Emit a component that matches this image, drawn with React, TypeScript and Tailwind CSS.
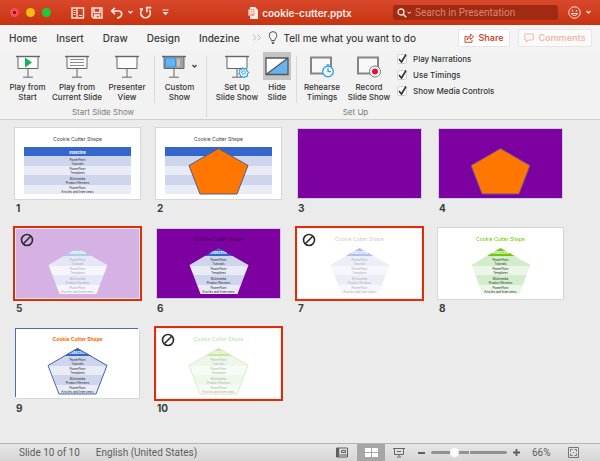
import React from "react";

type Palette = {
  header: string;
  odd: string;
  even: string;
  headText: string;
  text: string;
};

const BLUE: Palette = {
  header: "bg-[#3566cc]",
  odd: "bg-[#cfd5ec]",
  even: "bg-[#e9ebf7]",
  headText: "text-white",
  text: "text-[#1d1d2b]",
};

const PALE_BLUE: Palette = {
  header: "bg-[#b3c9ea]",
  odd: "bg-[#e4e7f6]",
  even: "bg-[#f6f5fc]",
  headText: "text-white",
  text: "text-[#aaa6b8]",
};

const GREEN: Palette = {
  header: "bg-[#6fc80a]",
  odd: "bg-[#d3eccb]",
  even: "bg-[#eaf6e6]",
  headText: "text-white",
  text: "text-[#1d2b1d]",
};

type Slide = {
  id: number;
  bg: string;
  frame: string;
  title?: string;
  table?: Palette;
  blankHeader?: boolean;
  clipped?: boolean;
  fill?: string;
  stroke?: string;
  hidden?: boolean;
  faded?: string;
};

const PLAIN = "shadow-[0_0_0_1px_#fff,0_0_0_2px_#d6d6d6]";
const PURPLE = "shadow-[0_0_0_1px_#cfc9ea]";

const slides: Slide[] = [
  { id: 1, bg: "bg-white", frame: PLAIN, title: "text-[#444]", table: BLUE },
  { id: 2, bg: "bg-white", frame: PLAIN, title: "text-[#444]", table: BLUE, blankHeader: true, fill: "#ff7700", stroke: "#4a5f96" },
  { id: 3, bg: "bg-[#7d00a0]", frame: PURPLE },
  { id: 4, bg: "bg-[#7d00a0]", frame: PURPLE, fill: "#ff7700", stroke: "#5f5590" },
  { id: 5, bg: "bg-[#d6b2e4]", frame: "", table: PALE_BLUE, clipped: true, hidden: true },
  { id: 6, bg: "bg-[#7d00a0]", frame: PURPLE, title: "text-[#43005c]", table: BLUE, clipped: true },
  { id: 7, bg: "bg-white", frame: "", title: "text-[#777]", table: BLUE, clipped: true, hidden: true, faded: "opacity-40" },
  { id: 8, bg: "bg-white", frame: PLAIN, title: "text-[#6fc80a]", table: GREEN, clipped: true },
  { id: 9, bg: "bg-white", frame: "shadow-[-1px_-1px_0_0_#4a6fae,1px_1px_0_0_#d6d6d6]", title: "font-bold text-[#ff6a00]", table: BLUE, clipped: true, stroke: "#4066b0" },
  { id: 10, bg: "bg-white", frame: "", title: "font-bold text-[#6fc85a]", table: GREEN, clipped: true, hidden: true, faded: "opacity-40", stroke: "#b5c47c" },
];

const rows: [string, string][] = [
  ["PowerPoint", "Tutorials"],
  ["PowerPoint", "Templates"],
  ["Multimedia", "Product Reviews"],
  ["PowerPoint", "Articles and Interviews"],
];

function Pentagon({ fill, stroke }: { fill?: string; stroke?: string }) {
  return (
    <svg className="absolute inset-0 size-full" viewBox="0 0 123 69" aria-hidden="true">
      <path d="M61.5 19.5 91 36.5 80 65H43L32 36.5Z" fill={fill ?? "none"} stroke={stroke ?? "none"} strokeWidth="1" />
    </svg>
  );
}

function SlideTable({ palette, clipped, blankHeader }: { palette: Palette; clipped?: boolean; blankHeader?: boolean }) {
  return (
    <div
      className={`mx-2 flex h-[47px] flex-col text-center text-[3px] leading-[4px] ${palette.text} ${
        clipped ? "[clip-path:polygon(50%_1px,calc(50%_+_30px)_18px,calc(50%_+_19px)_100%,calc(50%_-_18px)_100%,calc(50%_-_29px)_18px)]" : ""
      }`}
    >
      <div className={`h-[9px] pt-1 text-[4px] font-bold leading-[4px] ${palette.header} ${palette.headText}`}>
        {!blankHeader && "Indezine"}
      </div>
      {rows.map((r, i) => (
        <div key={i} className={`flex flex-1 flex-col justify-end ${i % 2 ? palette.even : palette.odd}`}>
          <span>{r[0]}</span>
          <span>{r[1]}</span>
        </div>
      ))}
    </div>
  );
}

function Thumb({ slide }: { slide: Slide }) {
  return (
    <li className="flex h-[100px] w-[129px] flex-col">
      <button
        aria-label={`Slide ${slide.id}`}
        className={`block h-[75px] w-full border-2 p-px ${slide.hidden ? "border-[#df2d0b] bg-[#fbeeee]" : "border-transparent"}`}
      >
        <div className={`relative h-full ${slide.bg} ${slide.frame}`}>
          <div className={`h-full ${slide.faded ?? ""}`}>
            <div className={`h-[18px] pt-[7px] text-center text-[5px] leading-[6px] ${slide.title ?? ""}`}>
              {slide.title && "Cookie Cutter Shape"}
            </div>
            {slide.table && <SlideTable palette={slide.table} clipped={slide.clipped} blankHeader={slide.blankHeader} />}
            {(slide.fill || slide.stroke) && <Pentagon fill={slide.fill} stroke={slide.stroke} />}
          </div>
          {slide.hidden && (
            <svg className="absolute left-1 top-1 size-[14px]" viewBox="0 0 14 14" fill="none" stroke="#2b2b30" aria-hidden="true">
              <circle cx="7" cy="7" r="5.5" strokeWidth="1.6" />
              <path d="m3.5 10.500 7-7" strokeWidth="1.6" />
            </svg>
          )}
        </div>
      </button>
      <span className="pl-[3px] text-[10px] font-bold leading-[14px] text-[#3c3c3c]">{slide.id}</span>
    </li>
  );
}

function Screen({ children, fill = "#fbfbfb" }: { children?: React.ReactNode; fill?: string }) {
  return (
    <svg className="h-6 w-[26px]" viewBox="0 0 26 24" fill="none" stroke="#666" aria-hidden="true">
      <path d="M3 2.500H23V14.500H3Z" fill={fill} />
      <path d="M1 2.500H25" strokeWidth="1.400" />
      <path d="M13 14.500V23M8 23.200H18" />
      {children}
    </svg>
  );
}

function Tool({ icon, lines, className = "", pressed }: { icon: React.ReactNode; lines: [string, string]; className?: string; pressed?: boolean }) {
  return (
    <button aria-pressed={pressed} className={`flex shrink-0 flex-col items-center ${className}`}>
      <span className={`flex h-[28px] items-center ${pressed ? "bg-[#c4c4c4] px-px" : ""}`}>{icon}</span>
      <span className="mt-[2px] whitespace-nowrap text-center text-[8px] font-medium leading-[10px] text-[#333]">
        {lines[0]}
        <br />
        {lines[1]}
      </span>
    </button>
  );
}

function Caret({ className = "" }: { className?: string }) {
  return (
    <svg className={`h-[5px] w-[7px] ${className}`} viewBox="0 0 7 5" fill="none" stroke="currentColor" strokeWidth="1.400" aria-hidden="true">
      <path d="m1.500 1 2 2 2-2" />
    </svg>
  );
}

function TitleBar() {
  return (
    <header className="grid h-[25px] grid-cols-[1fr_auto_1fr] items-center bg-linear-to-b from-[#d9482a] to-[#c5330f] text-[#fbe6e0]">
      <div className="flex items-center pl-[10px]">
        <div className="flex gap-[7px]">
          <button aria-label="Close" className="flex size-[9px] items-center justify-center rounded-full bg-[#fb4a55]">
            <span className="size-[3px] rounded-full bg-[#6b0d10]" />
          </button>
          <button aria-label="Minimize" className="size-[9px] rounded-full bg-[#fdbc12]" />
          <button aria-label="Zoom" className="size-[9px] rounded-full bg-[#1fc93c]" />
        </div>
        <button aria-label="Toggle thumbnails" className="ml-5">
          <svg className="h-3 w-[14px]" viewBox="0 0 14 12" fill="none" stroke="currentColor">
            <rect x="1" y="1" width="11.500" height="10" strokeWidth="1.400" />
            <path d="M6 1V11" strokeWidth="1.400" />
            <path d="M2.500 3.500H4.500M2.500 5.500H4.500M2.500 7.500H4.500M8 8.500h3" />
          </svg>
        </button>
        <button aria-label="Save" className="ml-[6px]">
          <svg className="size-3" viewBox="0 0 12 12" fill="none" stroke="currentColor" strokeWidth="1.400">
            <path d="M1 1H11V11H2.500L1 9.500Z" />
            <path d="M3 1V5.500H9V1M3.500 11V8H8.500V11" />
            <path d="M5 8V11" />
          </svg>
        </button>
        <button aria-label="Undo" className="ml-[7px]">
          <svg className="h-3 w-[13px]" viewBox="0 0 13 12" fill="none" stroke="currentColor" strokeWidth="1.700">
            <path d="M5 .8 1.700 4 5 7.200M1.700 4H8.300C10.500 4 11.700 5.300 11.700 7S10 10.800 7 11" />
          </svg>
        </button>
        <Caret className="ml-[4px]" />
        <button aria-label="Repeat" className="ml-[5px]">
          <svg className="size-[13px]" viewBox="0 0 13 13" fill="none" stroke="currentColor" strokeWidth="1.700">
            <path d="M3.200 3.500A4.800 4.800 0 1 0 10.300 4M7.800 6.300V1.700H12.300" />
            <path d="M.8 3H4" />
          </svg>
        </button>
        <button aria-label="Customize toolbar" className="ml-[10px]">
          <svg className="h-[7px] w-[7px]" viewBox="0 0 7 7" fill="currentColor">
            <path d="M.5.500H6.500V1.500H.5ZM.5 3H6.500L3.500 6.200Z" />
          </svg>
        </button>
      </div>
      <h1 className="flex items-center gap-1 text-[10px] font-semibold leading-3 text-[#fdeee9]">
        <svg className="h-3 w-[10px]" viewBox="0 0 10 12" aria-hidden="true">
          <path d="M2 0H7L10 3V12H2Z" fill="#fdeee9" />
          <rect y="2" width="6.500" height="7" rx="1" fill="#f3a08c" />
          <path d="M2 8V3.500H4A1.200 1.200 0 0 1 4 6H2" fill="none" stroke="#fff" />
        </svg>
        cookie-cutter.pptx
      </h1>
      <div className="flex items-center justify-end pr-2">
        <label className="flex h-[15px] w-[165px] items-center rounded-[3px] bg-[#a02a12] pl-1">
          <svg className="h-[10px] w-[16px]" viewBox="0 0 16 10" fill="none" stroke="currentColor" aria-hidden="true">
            <circle cx="4" cy="4" r="3" strokeWidth="1.300" />
            <path d="m6.200 6.200 3 3" strokeWidth="1.500" />
            <path d="m10.500 4 1.700 1.300L14 4" />
          </svg>
          <input
            type="text"
            aria-label="Search in Presentation"
            placeholder="Search in Presentation"
            className="ml-[2px] w-0 flex-1 bg-transparent font-['Roboto','Liberation_Sans',sans-serif] text-[10px] leading-3 outline-none placeholder:text-[#dc8672]"
          />
        </label>
        <button aria-label="Feedback" className="ml-[10px] flex items-center gap-[4px]">
          <svg className="size-[13px]" viewBox="0 0 13 13" fill="none" stroke="currentColor">
            <circle cx="6.500" cy="6.500" r="5.700" />
            <path d="M3.500 7.500a3.200 3.200 0 0 0 6 0Z" />
            <path d="M4.500 4v1.500M8.500 4v1.500" strokeWidth="1.300" />
          </svg>
          <Caret />
        </button>
      </div>
    </header>
  );
}

function Tabs() {
  return (
    <nav className="flex h-[25px] items-center bg-[#f5f4f4] pl-[9px] pr-2 text-[10px] font-medium leading-3 text-[#3a3a3a]">
      <div className="flex gap-[19px]">
        {["Home", "Insert", "Draw", "Design", "Indezine"].map((t) => (
          <button key={t}>{t}</button>
        ))}
      </div>
      <button aria-label="More tabs" className="ml-3">
        <svg className="h-[7px] w-[10px]" viewBox="0 0 10 7" fill="none" stroke="#b8b8b8">
          <path d="m1 .5 3 3-3 3M5.500.500l3 3-3 3" />
        </svg>
      </button>
      <button className="ml-[6px] flex items-center gap-[6px] font-normal text-[#222]">
        <svg className="h-[13px] w-[10px]" viewBox="0 0 10 13" fill="none" stroke="#555" aria-hidden="true">
          <path d="M3.300 9.500C3.300 7.500 1.200 6.800 1.200 4.400a3.800 3.800 0 0 1 7.600 0C8.800 6.800 6.700 7.500 6.700 9.500ZM3.500 11.300h3M4 12.500h2" />
        </svg>
        Tell me what you want to do
      </button>
      <div className="ml-auto flex gap-2">
        <button className="flex h-[18px] w-[52px] items-center justify-center gap-1 rounded-[2px] border border-[#e6e6e6] bg-white text-[9px] font-semibold text-[#cc4b33]">
          <svg className="size-[10px]" viewBox="0 0 10 10" fill="none" stroke="currentColor" aria-hidden="true">
            <path d="M3.500 3.500H1V9.300H8V7M3 7C3.200 4.500 4.500 3.200 6.500 3.200V1L9.500 4 6.500 6.500V4.700C5 4.700 4 5.300 3 7Z" />
          </svg>
          Share
        </button>
        <button className="flex h-[18px] w-[74px] items-center justify-center gap-1 rounded-[2px] border border-[#e6e6e6] bg-[#fbfafa] text-[9px] font-semibold text-[#f0b9ac]">
          <svg className="size-[10px]" viewBox="0 0 10 10" fill="none" stroke="currentColor" aria-hidden="true">
            <path d="M.8 1H9.200V7H4.500L2.500 9.200V7H.8Z" />
          </svg>
          Comments
        </button>
      </div>
    </nav>
  );
}

function Check({ label }: { label: string }) {
  return (
    <label className="flex h-[16px] items-center gap-[6px] text-[8px] font-medium leading-[10px] text-[#333]">
      <span className="relative flex size-[10px]">
        <input type="checkbox" defaultChecked className="peer size-[10px] appearance-none rounded-[2px] border border-[#d2d2d2] bg-white" />
        <svg className="pointer-events-none absolute -top-px left-0 hidden size-[11px] peer-checked:block" viewBox="0 0 11 11" fill="none" stroke="#333" strokeWidth="1.700" aria-hidden="true">
          <path d="m2 6 2.500 3L9 1.500" />
        </svg>
      </span>
      {label}
    </label>
  );
}

function Divider() {
  return <div className="mt-[6px] h-[47px] w-px shrink-0 bg-[#dadada]" />;
}

function Ribbon() {
  const clock = (
    <svg className="h-6 w-[26px]" viewBox="0 0 26 24" fill="none" aria-hidden="true">
      <rect x="2" y="3.500" width="20" height="16" fill="#f8f8f8" stroke="#858585" strokeWidth="2" />
      <circle cx="19" cy="17.500" r="5.300" fill="#fff" stroke="#35a3da" strokeWidth="1.400" />
      <path d="M19 14V17.500H22M17.500 11h3" stroke="#35a3da" strokeWidth="1.300" />
    </svg>
  );
  const record = (
    <svg className="h-6 w-[26px]" viewBox="0 0 26 24" fill="none" aria-hidden="true">
      <rect x="2" y="3.500" width="20" height="16" fill="#f8f8f8" stroke="#858585" strokeWidth="2" />
      <circle cx="19" cy="17.500" r="5.500" fill="#fff" stroke="#777" />
      <circle cx="19" cy="17.500" r="3" fill="#e8112d" />
    </svg>
  );
  const hide = (
    <svg className="h-6 w-[26px]" viewBox="0 0 26 24" fill="none" aria-hidden="true">
      <path d="M2 4H24V20.500H2Z" fill="#fff" />
      <path d="M24 4V20.500H2Z" fill="#69b4ef" />
      <path d="M2 4H24V20.500H2ZM24 4 2 20.500" stroke="#555" strokeWidth="1.300" />
    </svg>
  );
  return (
    <section className="flex h-[70px] border-b border-[#cfcfcf] bg-[#f3f2f2]">
      <div className="flex w-[206px] shrink-0 flex-col">
        <div className="flex h-[56px] pl-[3px]">
          <Tool className="w-[49px] pt-[2px]" lines={["Play from", "Start"]} icon={<Screen><path d="m10 3.500 7 5-7 5Z" fill="#12b454" stroke="none" /></Screen>} />
          <Tool className="w-[50px] pt-[2px]" lines={["Play from", "Current Slide"]} icon={<Screen><path d="M6 5.500H20M6 8.500H20M6 11.500H20" stroke="#8a8a8a" /></Screen>} />
          <Tool className="w-[50px] pt-[2px]" lines={["Presenter", "View"]} icon={<Screen />} />
          <div className="w-[2px]" />
          <Divider />
          <Tool
            className="w-[49px] pt-[2px]"
            lines={["Custom", "Show"]}
            icon={
              <span className="flex items-center gap-1 text-[#444]">
                <Screen fill="#a0a0a0">
                  <path d="M4.500 4H14.500V13H4.500Z" fill="#62b5f5" stroke="#3b95dd" />
                  <path d="M17.500 5V12.500" stroke="#c9c0b5" strokeWidth="3" />
                </Screen>
                <Caret />
              </span>
            }
          />
        </div>
        <p className="text-center text-[8px] leading-[12px] text-[#7b7b7b]">Start Slide Show</p>
      </div>
      <div className="mt-[6px] h-[61px] w-px shrink-0 bg-[#dadada]" />
      <div className="flex w-[297px] shrink-0 flex-col">
        <div className="flex h-[56px] pl-1">
          <Tool
            className="w-[52px] pt-[2px]"
            lines={["Set Up", "Slide Show"]}
            icon={
              <Screen>
                <path d="m24.500 18.500-1.300 1.600.3 2-2 .2-1.200 1.500-1.600-1.200-2 .2-.4-2-1.500-1.100 1.100-1.700-.4-2 2-.5 1.100-1.600 1.700 1.100 2-.4.500 2Z" fill="#f5fbff" stroke="#35a3da" strokeWidth="1.200" />
                <circle cx="19.500" cy="18.500" r="1.800" stroke="#35a3da" />
              </Screen>
            }
          />
          <Tool className="w-[28px] pt-[2px]" pressed lines={["Hide", "Slide"]} icon={hide} />
          <div className="w-[5px]" />
          <Divider />
          <Tool className="w-[50px] pt-[2px]" lines={["Rehearse", "Timings"]} icon={clock} />
          <Tool className="w-[44px] pt-[2px]" lines={["Record", "Slide Show"]} icon={record} />
          <div className="ml-[6px] flex flex-col pt-px">
            <Check label="Play Narrations" />
            <Check label="Use Timings" />
            <Check label="Show Media Controls" />
          </div>
        </div>
        <p className="text-center text-[8px] leading-[12px] text-[#7b7b7b]">Set Up</p>
      </div>
    </section>
  );
}

function StatusBar() {
  return (
    <footer className="flex h-[18px] items-center border-t border-[#b4b4b4] bg-linear-to-b from-[#e6e6e6] to-[#d6d6d6] pl-[19px] pr-[21px] font-['Roboto','Liberation_Sans',sans-serif] text-[10px] leading-3 text-[#5d5d5d]">
      <span>Slide 10 of 10</span>
      <span className="ml-4">English (United States)</span>
      <div className="ml-auto flex h-full items-center">
        <button aria-label="Normal view" className="mr-[9px]">
          <svg className="h-[11px] w-[12px]" viewBox="0 0 12 11" fill="none" stroke="#5f5f5f">
            <path d="M.5 1H11.500V10H.5Z" />
            <path d="M2 1V10" strokeWidth="2.400" />
            <path d="M5.500 3.500H9.500V5.500H5.500ZM3.500 8H11.500" />
          </svg>
        </button>
        <button aria-label="Slide sorter" aria-pressed="true" className="flex h-full w-[28px] items-center justify-center bg-[#a6a6a6]">
          <svg className="h-[9px] w-[13px]" viewBox="0 0 13 9" fill="#fff">
            <path d="M0 0H6V4H0ZM7 0H13V4H7ZM0 5H6V9H0ZM7 5H13V9H7Z" />
          </svg>
        </button>
        <button aria-label="Slide show" className="ml-2">
          <svg className="h-[11px] w-[12px]" viewBox="0 0 12 11" fill="none" stroke="#666">
            <path d="M0 1.500H12M1.500 1.500V7.500H10.500V1.500M4 4.500H8M6 7.500V9M4 10H8" />
          </svg>
        </button>
        <button aria-label="Zoom out" className="ml-[13px] h-[2px] w-[7px] bg-[#5f5f5f]" />
        <input
          type="range"
          aria-label="Zoom"
          min="0"
          max="100"
          defaultValue="28"
          className="mx-[6px] h-[9px] w-[76px] appearance-none bg-transparent [&::-webkit-slider-runnable-track]:h-[3px] [&::-webkit-slider-runnable-track]:rounded-full [&::-webkit-slider-runnable-track]:bg-[linear-gradient(to_right,#929292_38px,#e0e0e0_38px,#e0e0e0_39px,#929292_39px)] [&::-webkit-slider-thumb]:-mt-[3px] [&::-webkit-slider-thumb]:size-[9px] [&::-webkit-slider-thumb]:appearance-none [&::-webkit-slider-thumb]:rounded-full [&::-webkit-slider-thumb]:bg-white"
        />
        <button aria-label="Zoom in">
          <svg className="size-[7px]" viewBox="0 0 7 7" stroke="#5f5f5f" strokeWidth="1.800">
            <path d="M3.500 0V7M0 3.500H7" />
          </svg>
        </button>
        <span className="ml-3 w-[24px]">66%</span>
        <button aria-label="Fit to window" className="ml-3">
          <svg className="size-[11px]" viewBox="0 0 11 11" fill="none" stroke="#777">
            <path d="M.5.500H10.500V10.500H.5Z" />
            <path d="M2.500 4.500V2.500H4.500M6.500 2.500H8.500V4.500M8.500 6.500V8.500H6.500M4.500 8.500H2.500V6.500M5 5.500h1" />
          </svg>
        </button>
      </div>
    </footer>
  );
}

export default function App() {
  return (
    <div className="flex min-h-screen flex-col bg-[#ebebeb] font-['Inter','Liberation_Sans',sans-serif]">
      <TitleBar />
      <Tabs />
      <Ribbon />
      <main className="flex-1 pl-[13px] pr-2 pt-[6px]">
        <ul className="flex flex-wrap gap-x-3">
          {slides.map((s) => (
            <Thumb key={s.id} slide={s} />
          ))}
        </ul>
      </main>
      <StatusBar />
    </div>
  );
}
